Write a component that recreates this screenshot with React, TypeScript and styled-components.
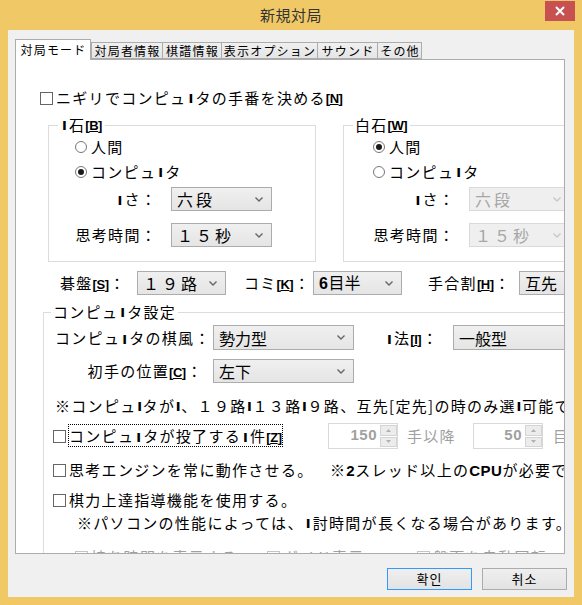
import React from "react";
import styled, { createGlobalStyle } from "styled-components";

const GlobalStyle = createGlobalStyle`
  html, body {
    margin: 0;
    padding: 0;
    background: #f0c866;
  }
  body {
    font-family: "Noto Sans CJK JP", "Noto Sans", sans-serif;
  }
`;

const Window = styled.div`
  width: 582px;
  height: 605px;
  background: #f0c866;
  display: flex;
  flex-direction: column;
  overflow: hidden;
`;

const TitleBar = styled.div`
  height: 30px;
  flex-shrink: 0;
  display: grid;
  grid-template-columns: 1fr auto 1fr;
  align-items: start;
`;

const Title = styled.div`
  grid-column: 2;
  font-size: 15px;
  line-height: 30px;
  letter-spacing: 0.5px;
  color: #333;
`;

const CloseBtn = styled.div`
  grid-column: 3;
  justify-self: end;
  margin: 1px 7px 0 0;
  width: 30px;
  height: 20px;
  background: #c75050;
  display: flex;
  align-items: center;
  justify-content: center;
`;

const Client = styled.div`
  flex: 1;
  margin: 0 8px 8px 8px;
  background: #f0f0f0;
  padding: 9px 7px 0 7px;
  display: flex;
  flex-direction: column;
`;

const TabStrip = styled.div`
  display: flex;
  align-items: flex-end;
  height: 20px;
  position: relative;
  z-index: 1;
`;

const Tab = styled.div<{ $w: number; $active?: boolean }>`
  width: ${(p) => p.$w}px;
  height: ${(p) => (p.$active ? 21 : 17)}px;
  margin-bottom: ${(p) => (p.$active ? -1 : 0)}px;
  margin-right: ${(p) => (p.$active ? 0 : -1)}px;
  box-sizing: border-box;
  border: 1px solid #acacac;
  border-bottom: ${(p) => (p.$active ? "none" : "1px solid #acacac")};
  background: ${(p) => (p.$active ? "#ffffff" : "linear-gradient(#f0f0f0, #e5e5e5)")};
  font-size: 12px;
  line-height: ${(p) => (p.$active ? 19 : 15)}px;
  letter-spacing: 1.2px;
  text-indent: 1px;
  text-align: center;
  color: #000;
  white-space: nowrap;
  overflow: hidden;
`;

const Panel = styled.div`
  height: 495px;
  margin-right: 2px;
  box-sizing: border-box;
  border: 1px solid #acacac;
  background: #ffffff;
  overflow: hidden;
  display: flex;
  flex-direction: column;
  font-size: 15px;
  line-height: 20px;
  letter-spacing: 1.3px;
  color: #000;
  white-space: nowrap;
`;

const Row = styled.div<{ $top?: number; $left?: number; $h?: number }>`
  display: flex;
  align-items: center;
  flex-shrink: 0;
  margin-top: ${(p) => p.$top ?? 0}px;
  margin-left: ${(p) => p.$left ?? 0}px;
  height: ${(p) => p.$h ?? 20}px;
`;

const GroupRow = styled.div`
  display: flex;
  margin-top: 7px;
  margin-left: 32px;
  flex-shrink: 0;
`;

const Group = styled.fieldset<{ $w: number; $gapLeft?: number }>`
  margin: 0 0 0 ${(p) => p.$gapLeft ?? 0}px;
  padding: 0;
  width: ${(p) => p.$w}px;
  box-sizing: border-box;
  border: 1px solid #dcdcdc;
  flex-shrink: 0;
  min-width: 0;
`;

const Legend = styled.legend<{ $left?: number }>`
  margin-left: ${(p) => p.$left ?? 9}px;
  padding: 0 2px;
  font-size: 15px;
  line-height: 20px;
  height: 20px;
  display: flex;
  align-items: center;
`;

const GroupBody = styled.div<{ $pad: number; $bottom: number }>`
  padding: 0 0 ${(p) => p.$bottom}px ${(p) => p.$pad}px;
  display: flex;
  flex-direction: column;
`;

const Label = styled.span<{ $w?: number; $right?: boolean; $gray?: boolean }>`
  display: inline-block;
  width: ${(p) => (p.$w ? `${p.$w}px` : "auto")};
  text-align: ${(p) => (p.$right ? "right" : "left")};
  flex-shrink: 0;
  color: ${(p) => (p.$gray ? "#a0a0a0" : "#000")};
`;

const Glitch = styled.span`
  font-family: "DejaVu Sans", sans-serif;
  font-weight: bold;
  font-size: 13px;
  line-height: 1;
  letter-spacing: 0;
  display: inline-block;
  width: 9px;
  text-align: center;
`;

const AccKey = styled.span`
  font-family: "Liberation Sans", sans-serif;
  font-weight: bold;
  font-size: 13px;
  line-height: 1;
  letter-spacing: -0.5px;
  margin-right: 1px;
  u {
    text-underline-offset: 1px;
  }
`;

const Latin = styled.b`
  font-family: "Liberation Sans", sans-serif;
  letter-spacing: 0.5px;
`;

const Combo = styled.div<{ $w: number; $h?: number; $off?: boolean; $spaced?: boolean; $ml?: number }>`
  width: ${(p) => p.$w}px;
  height: ${(p) => p.$h ?? 24}px;
  margin-left: ${(p) => p.$ml ?? 0}px;
  box-sizing: border-box;
  flex-shrink: 0;
  border: 1px solid ${(p) => (p.$off ? "#d9d9d9" : "#acacac")};
  background: ${(p) => (p.$off ? "#efefef" : "linear-gradient(#f0f0f0, #e5e5e5)")};
  color: ${(p) => (p.$off ? "#a6a6a6" : "#000")};
  display: flex;
  align-items: center;
  justify-content: space-between;
  padding: 0 8px 0 5px;
  font-size: 16px;
  letter-spacing: ${(p) => (p.$spaced ? "3px" : "0")};
`;

const Box = styled.span<{ $off?: boolean }>`
  display: inline-block;
  width: 13px;
  height: 13px;
  box-sizing: border-box;
  border: 1px solid ${(p) => (p.$off ? "#c4c4c4" : "#666")};
  background: #fff;
  margin-right: 3px;
  flex-shrink: 0;
`;

const Radio = styled.span<{ $on?: boolean }>`
  display: inline-flex;
  align-items: center;
  justify-content: center;
  width: 12px;
  height: 12px;
  box-sizing: border-box;
  border: 1px solid #777;
  border-radius: 50%;
  background: #fff;
  margin-right: 4px;
  flex-shrink: 0;
  &::after {
    content: "";
    display: ${(p) => (p.$on ? "block" : "none")};
    width: 6px;
    height: 6px;
    border-radius: 50%;
    background: #1a1a1a;
  }
`;

const FocusCell = styled.span`
  width: 259px;
  flex-shrink: 0;
`;

const Focus = styled.span`
  outline: 1px dotted #000;
  outline-offset: 0;
  line-height: 18px;
`;

const Spin = styled.div`
  width: 70px;
  height: 26px;
  box-sizing: border-box;
  border: 1px solid #d9d9d9;
  background: #fff;
  display: flex;
  flex-shrink: 0;
`;

const SpinValue = styled.div`
  flex: 1;
  text-align: right;
  padding-right: 3px;
  font-family: "Liberation Sans", sans-serif;
  font-weight: bold;
  font-size: 15px;
  letter-spacing: 0.5px;
  line-height: 22px;
  color: #a0a0a0;
`;

const SpinArrows = styled.div`
  width: 17px;
  display: flex;
  flex-direction: column;
  gap: 1px;
  padding: 1px 0;
`;

const SpinArrow = styled.div`
  flex: 1;
  background: #ececec;
  border: 1px solid #d4d4d4;
  display: flex;
  align-items: center;
  justify-content: center;
`;

const Buttons = styled.div`
  display: flex;
  justify-content: flex-end;
  gap: 10px;
  margin-top: 14px;
`;

const Button = styled.div<{ $default?: boolean }>`
  width: 85px;
  height: 22px;
  box-sizing: border-box;
  border: 1px solid ${(p) => (p.$default ? "#3399ff" : "#acacac")};
  background: linear-gradient(#efefef, #e3e3e3);
  font-family: "Noto Sans CJK KR", "Noto Sans CJK JP", sans-serif;
  font-size: 13px;
  line-height: 20px;
  letter-spacing: 1px;
  text-align: center;
  color: #000;
`;

const Chevron = ({ off }: { off?: boolean }) => (
  <svg width="8" height="5" viewBox="0 0 8 5">
    <polyline points="0.5,0.5 4,4 7.5,0.5" fill="none" stroke={off ? "#c8c8c8" : "#666"} strokeWidth="1.4" />
  </svg>
);

const Tri = ({ up }: { up?: boolean }) => (
  <svg width="5" height="3" viewBox="0 0 5 3">
    <polygon points={up ? "0,3 2.5,0 5,3" : "0,0 2.5,3 5,0"} fill="#b0b0b0" />
  </svg>
);

const A = ({ k }: { k: string }) => (
  <AccKey>
    [<u>{k}</u>]
  </AccKey>
);

const G = () => <Glitch>I</Glitch>;

const Select = (props: { w: number; h?: number; off?: boolean; spaced?: boolean; ml?: number; children: React.ReactNode }) => (
  <Combo $w={props.w} $h={props.h} $off={props.off} $spaced={props.spaced} $ml={props.ml}>
    <span>{props.children}</span>
    <Chevron off={props.off} />
  </Combo>
);

const SpinBox = ({ value }: { value: string }) => (
  <Spin>
    <SpinValue>{value}</SpinValue>
    <SpinArrows>
      <SpinArrow>
        <Tri up />
      </SpinArrow>
      <SpinArrow>
        <Tri />
      </SpinArrow>
    </SpinArrows>
  </Spin>
);

const StoneGroup = ({ title, keyChar, human, off, gapLeft, pad }: { title: React.ReactNode; keyChar: string; human: boolean; off?: boolean; gapLeft?: number; pad: number }) => (
  <Group $w={268} $gapLeft={gapLeft}>
    <Legend>
      {title}
      <A k={keyChar} />
    </Legend>
    <GroupBody $pad={pad} $bottom={14}>
      <Row $h={24}>
        <Radio $on={human} />
        人間
      </Row>
      <Row $top={1} $h={24}>
        <Radio $on={!human} />
        コンピュ<G />タ
      </Row>
      <Row $top={3} $h={24}>
        <Label $w={82} $right>
          <G />さ：
        </Label>
        <Select w={101} off={off} spaced ml={14}>
          六段
        </Select>
      </Row>
      <Row $top={12} $h={24}>
        <Label $w={82} $right>
          思考時間：
        </Label>
        <Select w={101} off={off} spaced ml={14}>
          １５秒
        </Select>
      </Row>
    </GroupBody>
  </Group>
);

export default function App() {
  return (
    <>
      <GlobalStyle />
      <Window>
        <TitleBar>
          <Title>新規対局</Title>
          <CloseBtn>
            <svg width="10" height="10" viewBox="0 0 10 10">
              <path d="M1 1 L9 9 M9 1 L1 9" stroke="#fff" strokeWidth="2" />
            </svg>
          </CloseBtn>
        </TitleBar>
        <Client>
          <TabStrip>
            <Tab $w={76} $active>
              対局モード
            </Tab>
            <Tab $w={72}>対局者情報</Tab>
            <Tab $w={60}>棋譜情報</Tab>
            <Tab $w={97}>表示オプション</Tab>
            <Tab $w={61}>サウンド</Tab>
            <Tab $w={45}>その他</Tab>
          </TabStrip>
          <Panel>
            <Row $top={28} $left={24}>
              <Box />
              ニギリでコンピュ<G />タの手番を決める<A k="N" />
            </Row>

            <GroupRow>
              <StoneGroup title={<><G />石</>} keyChar="B" human={false} pad={26} />
              <StoneGroup title="白石" keyChar="W" human off gapLeft={27} pad={29} />
            </GroupRow>

            <Row $top={9} $left={44} $h={24}>
              <Label $w={77}>
                碁盤<A k="S" />：
              </Label>
              <Select w={89} spaced>
                １９路
              </Select>
              <Label $w={69} style={{ marginLeft: 18 }}>
                コミ<A k="K" />：
              </Label>
              <Select w={89}>
                <Latin>6</Latin>目半
              </Select>
              <Label $w={91} style={{ marginLeft: 26 }}>
                手合割<A k="H" />：
              </Label>
              <Select w={80}>互先</Select>
            </Row>

            <Row $top={7} $left={27} $h={252} style={{ alignItems: "flex-start" }}>
              <Group $w={560}>
                <Legend $left={7}>
                  コンピュ<G />タ設定
                </Legend>
                <GroupBody $pad={11} $bottom={0}>
                  <Row $top={3} $h={25}>
                    <Label $w={148} $right>
                      コンピュ<G />タの棋風：
                    </Label>
                    <Select w={141} h={25} ml={10}>
                      勢力型
                    </Select>
                    <Label $w={68} style={{ marginLeft: 31 }}>
                      <G />法<A k="I" />：
                    </Label>
                    <Select w={140} h={25}>
                      一般型
                    </Select>
                  </Row>
                  <Row $top={9} $h={24}>
                    <Label $w={148} $right>
                      初手の位置<A k="C" />：
                    </Label>
                    <Select w={141} ml={10}>
                      左下
                    </Select>
                  </Row>
                  <Row $top={13}>
                    ※コンピュ<G />タが<G />、１９路<G />１３路<G />９路、互先[定先]の時のみ選<G />可能です。
                  </Row>
                  <Row $top={7} $h={26} $left={-2}>
                    <Box />
                    <FocusCell>
                      <Focus>
                        コンピュ<G />タが投了する<G />件<A k="Z" />
                      </Focus>
                    </FocusCell>
                    <SpinBox value="150" />
                    <Label $w={66} $gray style={{ marginLeft: 9 }}>
                      手以降
                    </Label>
                    <SpinBox value="50" />
                    <Label $gray style={{ marginLeft: 10 }}>
                      目以上の差
                    </Label>
                  </Row>
                  <Row $top={11} $left={-2}>
                    <Box />
                    <Label $w={261}>思考エンジンを常に動作させる。</Label>
                    <span>
                      ※<Latin>2</Latin>スレッド以上の<Latin>CPU</Latin>が必要です。
                    </span>
                  </Row>
                  <Row $top={10} $left={-2}>
                    <Box />
                    棋力上達指導機能を使用する。
                  </Row>
                  <Row $top={3} $left={22}>
                    ※パソコンの性能によっては、<G />討時間が長くなる場合があります。
                  </Row>
                  <Row $top={14} $left={20}>
                    <Box $off />
                    <Label $w={176} $gray>
                      持ち時間を表示する
                    </Label>
                    <Box $off />
                    <Label $w={134} $gray>
                      ガイド表示
                    </Label>
                    <Box $off />
                    <Label $gray>盤面を自動回転</Label>
                  </Row>
                </GroupBody>
              </Group>
            </Row>
          </Panel>
          <Buttons>
            <Button $default>확인</Button>
            <Button>취소</Button>
          </Buttons>
        </Client>
      </Window>
    </>
  );
}
